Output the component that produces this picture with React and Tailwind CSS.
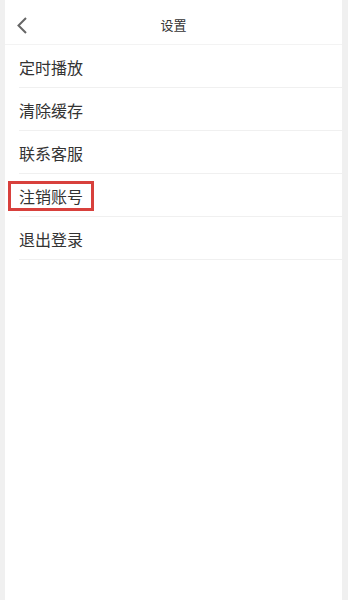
const items = ["定时播放", "清除缓存", "联系客服", "注销账号", "退出登录"];

const App = () => {
  return (
    <div
      className="flex h-[600px] w-[348px] bg-[#f0f0f0] pl-[5px] pr-[6px]"
      style={{ fontFamily: '"Noto Sans CJK SC", "Noto Sans", sans-serif' }}
    >
      <div className="flex flex-1 flex-col bg-white">
        {/* header */}
        <div className="relative flex h-[45px] items-center justify-center border-b border-[#f3f3f3] pt-[6px]">
          <svg
            className="absolute left-[11px] top-[17px]"
            width="12"
            height="17"
            viewBox="0 0 12 17"
            fill="none"
          >
            <path d="M10 1L2.5 8.5L10 16" stroke="#666" strokeWidth="2" />
          </svg>
          <span className="text-[13px] text-[#333]">设置</span>
        </div>

        {/* list */}
        <div className="flex flex-col">
          {items.map((item) => (
            <div
              key={item}
              className="ml-[14px] flex h-[43px] items-center border-b border-[#f0f0f0] pt-[2px]"
            >
              {item === "注销账号" ? (
                <span className="-ml-[11px] flex h-[30px] items-center border-[3px] border-[#d8403c] pl-[8px] pr-[8px] text-[16px] text-[#333]">
                  {item}
                </span>
              ) : (
                <span className="text-[16px] text-[#333]">{item}</span>
              )}
            </div>
          ))}
        </div>
      </div>
    </div>
  );
};

export default App;
